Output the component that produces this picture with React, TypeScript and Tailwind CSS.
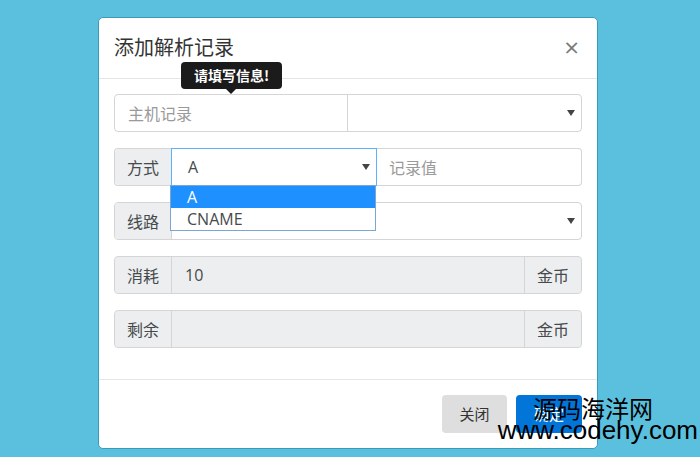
import React from "react";

const cjk = { fontFamily: '"Noto Sans CJK SC", "Open Sans", sans-serif' };
const latin = { fontFamily: '"Open Sans", "Noto Sans CJK SC", sans-serif' };

function Arrow() {
  return (
    <svg width="8" height="6" viewBox="0 0 8 6" className="shrink-0">
      <path d="M0 0 L8 0 L4 6 Z" fill="#444" />
    </svg>
  );
}

function Addon({ children, right }: { children: React.ReactNode; right?: boolean }) {
  return (
    <div
      className={`w-[57px] shrink-0 flex items-center justify-center bg-[#eceeef] text-[16px] text-[#464a4c] border-[#d5d5d5] ${
        right ? "border-l rounded-r" : "border-r rounded-l"
      }`}
      style={cjk}
    >
      {children}
    </div>
  );
}

export default function App() {
  return (
    <div className="w-[700px] h-[457px] bg-[#5bc0de] overflow-hidden relative">
      <div className="ml-[98px] mt-[17px] w-[500px] bg-white rounded-[5px] border border-[#3b9ab8]">
        {/* Header */}
        <div className="h-[61px] flex items-center justify-between px-[15px] border-b border-[#e5e5e5] relative">
          <div className="text-[20px] text-[#333] mt-[-2px]" style={cjk}>
            添加解析记录
          </div>
          <div className="text-[26px] text-[#7a7a7a] leading-none mr-[3px] mt-[-2px]" style={latin}>
            ×
          </div>
          {/* tooltip */}
          <div className="absolute left-[82px] top-[44px] z-10">
            <div
              className="bg-[#1b1b1b] text-white text-[14px] font-bold rounded-[4px] w-[101px] h-[27px] flex items-center justify-center"
              style={cjk}
            >
              请填写信息!
            </div>
            <div className="w-0 h-0 border-l-[5px] border-r-[5px] border-t-[5px] border-l-transparent border-r-transparent border-t-[#1b1b1b] ml-[45px]" />
          </div>
        </div>

        {/* Body */}
        <div className="px-[15px] pt-[15px] pb-[15px]">
          {/* Row 1 */}
          <div className="flex h-[38px] mb-[16px] border border-[#d5d5d5] rounded">
            <div className="w-[233px] shrink-0 flex items-center pl-[13px] text-[16px] text-[#9a9a9a] border-r border-[#d5d5d5]" style={cjk}>
              主机记录
            </div>
            <div className="flex-1 flex items-center justify-end pr-[6px]">
              <Arrow />
            </div>
          </div>

          {/* Row 2 */}
          <div className="flex h-[38px] mb-[16px] relative">
            <div className="flex border border-[#d5d5d5] rounded-l border-r-0">
              <Addon>方式</Addon>
            </div>
            <div className="w-[206px] ml-[-1px] flex items-center justify-between pl-[16px] pr-[6px] border border-[#5cb3fd] text-[16px] text-[#464a4c]" style={latin}>
              <span>A</span>
              <Arrow />
            </div>
            <div className="flex-1 flex items-center pl-[12px] text-[16px] text-[#9a9a9a] border border-l-0 border-[#d5d5d5] rounded-r" style={cjk}>
              记录值
            </div>
            {/* dropdown */}
            <div className="absolute left-[56px] top-[37px] w-[206px] bg-white border border-[#7ca6d0] z-10 text-[16px] leading-[22px]" style={latin}>
              <div className="bg-[#1e90ff] text-white pl-[16px] h-[22px]">A</div>
              <div className="text-[#464a4c] pl-[16px] h-[22px]">CNAME</div>
            </div>
          </div>

          {/* Row 3 */}
          <div className="flex h-[38px] mb-[16px] border border-[#d5d5d5] rounded">
            <Addon>线路</Addon>
            <div className="flex-1 flex items-center justify-end pr-[6px]">
              <Arrow />
            </div>
          </div>

          {/* Row 4 */}
          <div className="flex h-[38px] mb-[16px] border border-[#d5d5d5] rounded bg-[#eceeef]">
            <Addon>消耗</Addon>
            <div className="flex-1 flex items-center pl-[13px] text-[16px] text-[#464a4c]" style={latin}>
              10
            </div>
            <Addon right>金币</Addon>
          </div>

          {/* Row 5 */}
          <div className="flex h-[38px] mb-[16px] border border-[#d5d5d5] rounded bg-[#eceeef]">
            <Addon>剩余</Addon>
            <div className="flex-1" />
            <Addon right>金币</Addon>
          </div>
        </div>

        {/* Footer */}
        <div className="border-t border-[#e5e5e5] px-[15px] py-[15px] flex justify-end gap-[9px]">
          <div className="w-[65px] h-[38px] rounded bg-[#dedede] flex items-center justify-center text-[15px] text-[#333]" style={cjk}>
            关闭
          </div>
          <div className="w-[66px] h-[38px] rounded bg-[#0275d8] flex items-center justify-center text-[15px] text-white" style={cjk}>
            确定
          </div>
        </div>
      </div>

      {/* Watermark */}
      <div className="absolute right-[2px] top-[396px] flex flex-col items-end leading-none text-black z-20">
        <div className="text-[24px] mr-[45px]" style={cjk}>
          源码海洋网
        </div>
        <div className="text-[26px] mt-[-3px]" style={{ fontFamily: '"Liberation Sans", Arial, sans-serif' }}>
          www.codehy.com
        </div>
      </div>
    </div>
  );
}
